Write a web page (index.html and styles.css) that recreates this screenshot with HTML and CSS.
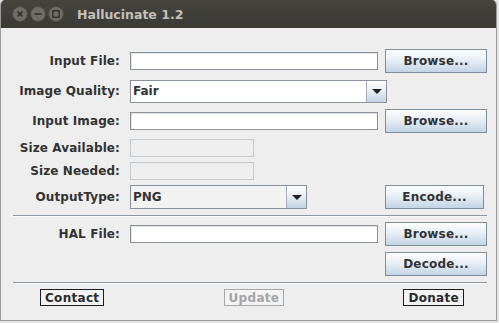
FILE: index.html
```html
<!DOCTYPE html>
<html lang="en">

<head>
    <meta charset="UTF-8">
    <title>Hallucinate 1.2</title>
    <link rel="stylesheet" href="styles.css">
</head>

<body>
    <div class="window">
        <div class="titlebar">
            <div class="wm-buttons">
                <svg class="wm-btn" viewBox="0 0 16 16">
                    <circle cx="8" cy="8" r="7.5" fill="#6e6c66" stroke="#4b4a45" />
                    <path d="M5.5 5.5l5 5M10.5 5.5l-5 5" stroke="#2c2b27" stroke-width="1.6" />
                </svg>
                <svg class="wm-btn" viewBox="0 0 16 16">
                    <circle cx="8" cy="8" r="7.5" fill="#6e6c66" stroke="#4b4a45" />
                    <path d="M4.5 8h7" stroke="#2c2b27" stroke-width="1.6" />
                </svg>
                <svg class="wm-btn" viewBox="0 0 16 16">
                    <circle cx="8" cy="8" r="7.5" fill="#6e6c66" stroke="#4b4a45" />
                    <rect x="4.8" y="4.8" width="6.4" height="6.4" fill="none" stroke="#2c2b27" stroke-width="1.3" />
                </svg>
            </div>
            <span class="title">Hallucinate 1.2</span>
        </div>

        <div class="panel">
            <div class="form">
                <div class="row">
                    <span class="label">Input File:</span>
                    <div class="field"></div>
                    <div class="btn">Browse...</div>
                </div>
                <div class="row">
                    <span class="label">Image Quality:</span>
                    <div class="combo combo-wide">
                        <span class="combo-value">Fair</span>
                        <div class="combo-arrow"></div>
                    </div>
                </div>
                <div class="row">
                    <span class="label">Input Image:</span>
                    <div class="field"></div>
                    <div class="btn">Browse...</div>
                </div>
                <div class="row row-info">
                    <span class="label">Size Available:</span>
                    <div class="field field-disabled"></div>
                </div>
                <div class="row row-info">
                    <span class="label">Size Needed:</span>
                    <div class="field field-disabled"></div>
                </div>
                <div class="row">
                    <span class="label">OutputType:</span>
                    <div class="combo combo-short">
                        <span class="combo-value">PNG</span>
                        <div class="combo-arrow"></div>
                    </div>
                    <div class="btn btn-encode">Encode...</div>
                </div>
            </div>

            <div class="sep"></div>

            <div class="form form-hal">
                <div class="row">
                    <span class="label">HAL File:</span>
                    <div class="field"></div>
                    <div class="btn">Browse...</div>
                </div>
                <div class="row">
                    <div class="btn">Decode...</div>
                </div>
            </div>

            <div class="sep"></div>

            <div class="footer">
                <div class="link-btn">Contact</div>
                <div class="link-btn disabled">Update</div>
                <div class="link-btn">Donate</div>
            </div>
        </div>
    </div>
</body>

</html>
```

FILE: styles.css
```css
body {
    margin: 0;
    background: #e4e4e4;
    font-family: "DejaVu Sans", sans-serif;
}

.window {
    width: 497px;
    height: 321px;
    display: flex;
    flex-direction: column;
    background: #eeeeee;
    border: 1px solid #9b9b9b;
    border-top: none;
    border-radius: 5px 5px 0 0;
    box-sizing: border-box;
    overflow: hidden;
}

.titlebar {
    height: 28px;
    flex-shrink: 0;
    display: flex;
    align-items: center;
    background: linear-gradient(#45443f, #3a3935);
    padding-left: 11px;
}

.wm-buttons {
    display: flex;
    gap: 2px;
}

.wm-btn {
    width: 16px;
    height: 16px;
}

.title {
    margin-left: 13px;
    font-size: 12.5px;
    font-weight: bold;
    color: #c4c1b9;
}

.panel {
    flex: 1;
    display: flex;
    flex-direction: column;
    padding: 21px 9px 0 12px;
}

.form {
    display: flex;
    flex-direction: column;
    gap: 5px;
}

.form-hal {
    gap: 6px;
    margin-top: 5px;
}

.row {
    height: 24px;
    display: flex;
    align-items: center;
}

.form .row + .row {
    margin-top: 1px;
}

.form-hal .row + .row {
    margin-top: 0;
}

.row-info {
    height: 18px;
}

.form .row-info,
.form .row-info + .row {
    margin-top: 0;
}

.label {
    width: 107px;
    margin-right: 10px;
    text-align: right;
    font-size: 12px;
    font-weight: bold;
    color: #333333;
    letter-spacing: 0.1px;
    white-space: nowrap;
}

.field {
    width: 248px;
    height: 18px;
    box-sizing: border-box;
    background: #ffffff;
    border: 1px solid #8a939c;
    box-shadow: inset 1px 1px 0 #e2e2e2;
}

.field-disabled {
    width: 124px;
    background: #eeeeee;
    border-color: #c6cbd0;
    box-shadow: none;
}

.btn {
    width: 102px;
    height: 24px;
    margin-left: auto;
    box-sizing: border-box;
    display: flex;
    align-items: center;
    justify-content: center;
    border: 1px solid #7f8e9c;
    background: linear-gradient(#fdfeff, #e8eff6 45%, #c3d4e5);
    font-size: 12px;
    font-weight: bold;
    letter-spacing: 0.2px;
    color: #333333;
}

.btn-encode {
    width: 99px;
    margin-right: 3px;
}

.combo {
    height: 23px;
    box-sizing: border-box;
    display: flex;
    align-items: center;
    border: 1px solid #8a939c;
    background: #ffffff;
}

.combo-wide {
    width: 257px;
}

.combo-short {
    width: 177px;
    height: 24px;
    background: #f3f3f3;
}

.combo-value {
    flex: 1;
    padding-left: 2px;
    font-size: 12px;
    font-weight: bold;
    color: #333333;
}

.combo-arrow {
    width: 19px;
    height: 100%;
    display: flex;
    align-items: center;
    justify-content: center;
    border-left: 1px solid #a4afb9;
    background: linear-gradient(#fdfeff, #e8eff6 45%, #c3d4e5);
}

.combo-arrow::after {
    content: "";
    border-left: 5px solid transparent;
    border-right: 5px solid transparent;
    border-top: 5px solid #222222;
}

.sep {
    height: 1px;
    margin-top: 6px;
    background: #8f979f;
    border-bottom: 1px solid #fafafa;
}

.footer {
    display: flex;
    justify-content: space-between;
    margin-top: 5px;
    padding: 0 23px 0 27px;
}

.link-btn {
    height: 17px;
    padding: 0 4px;
    box-sizing: border-box;
    display: flex;
    align-items: center;
    border: 1px solid #1e1e1e;
    background: #f3f3f3;
    font-size: 12px;
    font-weight: bold;
    letter-spacing: 0.3px;
    color: #2a2a2a;
}

.link-btn.disabled {
    border-color: #a8a8a8;
    color: #a4a4a4;
}
```
